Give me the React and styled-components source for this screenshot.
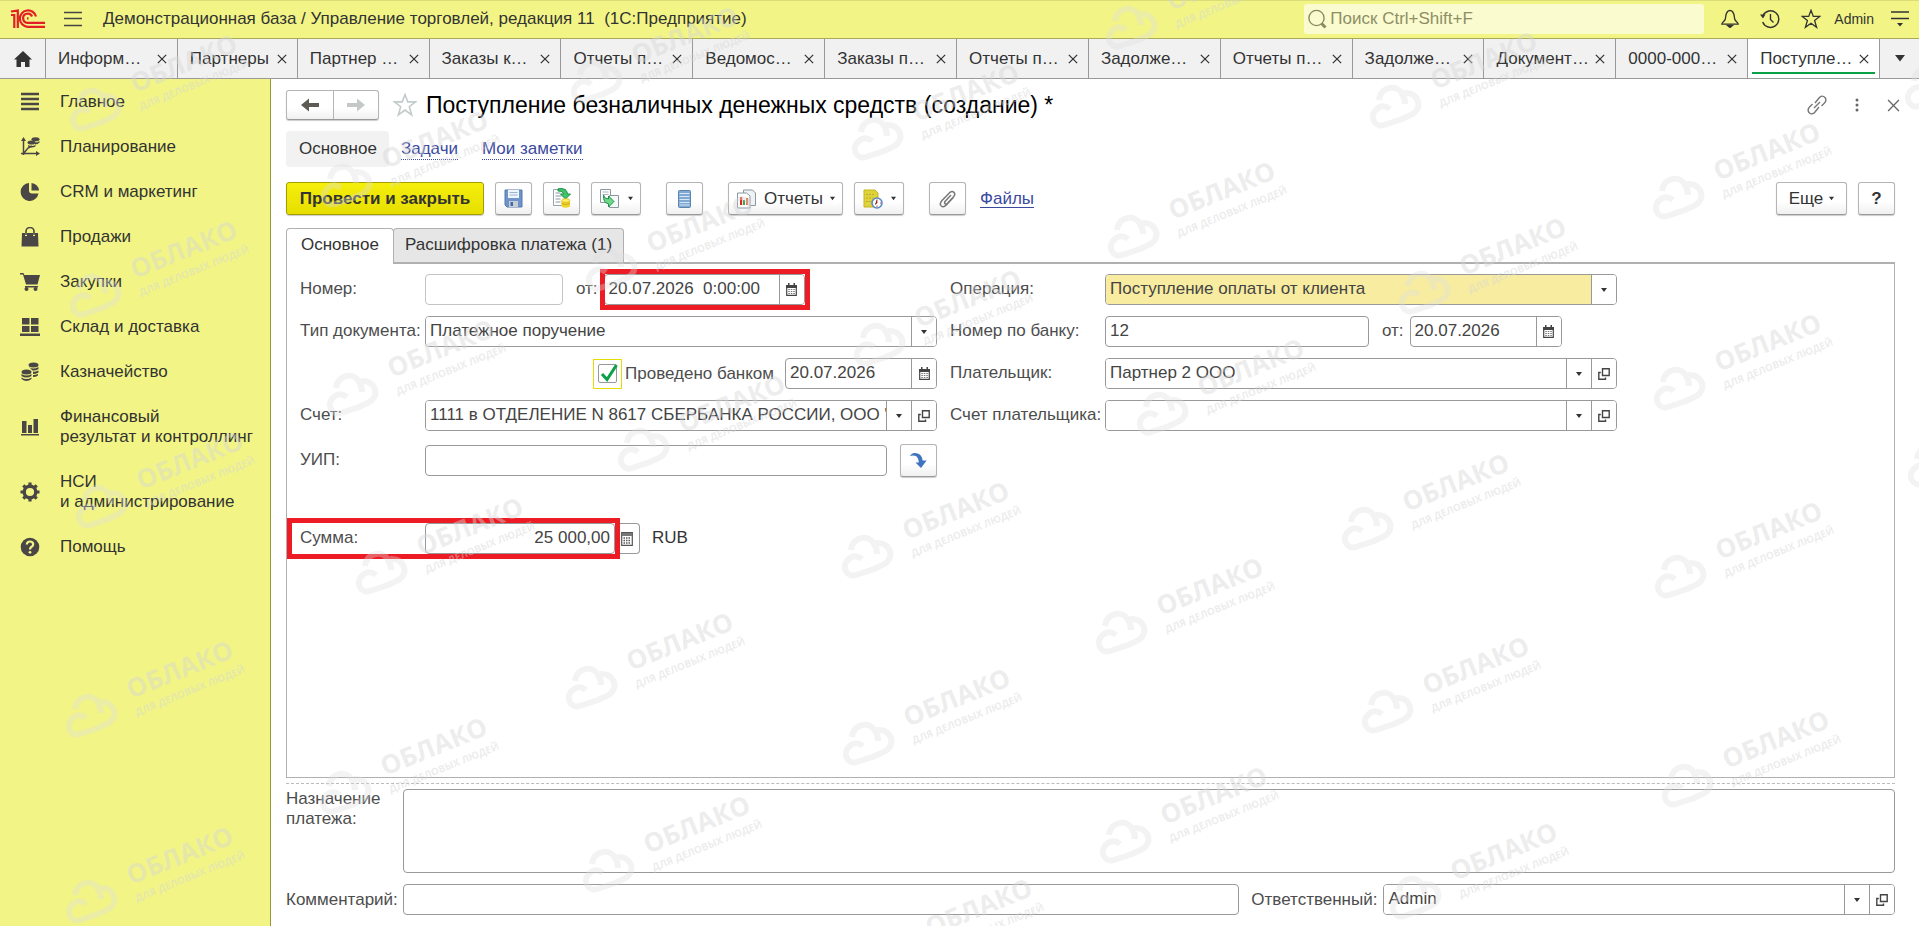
import React, { useState } from 'react';
import styled, { createGlobalStyle, css } from 'styled-components';

const menuItems = [
  { icon: 'main', lines: ['Главное'] },
  { icon: 'plan', lines: ['Планирование'] },
  { icon: 'crm', lines: ['CRM и маркетинг'] },
  { icon: 'sales', lines: ['Продажи'] },
  { icon: 'cart', lines: ['Закупки'] },
  { icon: 'stock', lines: ['Склад и доставка'] },
  { icon: 'coins', lines: ['Казначейство'] },
  { icon: 'bars', lines: ['Финансовый', 'результат и контроллинг'] },
  { icon: 'gear', lines: ['НСИ', 'и администрирование'] },
  { icon: 'help', lines: ['Помощь'] }
];

const openTabs = [
  'Информ…', 'Партнеры', 'Партнер …', 'Заказы к…', 'Отчеты п…', 'Ведомос…', 'Заказы п…',
  'Отчеты п…', 'Задолже…', 'Отчеты п…', 'Задолже…', 'Документ…', '0000-000…', 'Поступле…'
];

// centre of the cloud, the caption hangs to the right of it
const stamps = [
  [96, 110], [347, 186], [96, 296], [597, 82], [612, 270], [1132, 28], [878, 139], [1134, 237],
  [880, 345], [1396, 107], [1679, 198], [1425, 293], [1931, 88], [102, 507], [353, 395],
  [382, 573], [92, 716], [92, 902], [644, 450], [592, 688], [346, 793], [609, 871], [868, 557],
  [869, 744], [891, 954], [1122, 633], [1126, 842], [1163, 414], [1368, 529], [1388, 712],
  [1416, 898], [1688, 786], [1680, 389], [1681, 577], [1934, 466]
];

const sideIcons = {
  main: <path d="M1 2h18M1 7h18M1 12h18M1 17h18" stroke="#4a4646" strokeWidth="2.4" />,
  plan: (
    <>
      <path d="M3.5 3v15M1 16.500h16M4 16l4-5 4-2" stroke="#4a4646" strokeWidth="1.500" fill="none" />
      <path d="M3.500 0L6 4H1zM20 16.500l-4-2.500v5z" />
      <ellipse cx="15.500" cy="2.200" rx="4" ry="2" />
      <ellipse cx="11.500" cy="5.500" rx="4" ry="2" />
      <path d="M15 5.500q3 0 4.500-1.500v1.500q-1.500 2-4.500 2zM8 8q3.500 2 7.500 0v1.500q-4 2-7.500 0z" />
    </>
  ),
  crm: <path d="M9 1a9 9 0 1 0 9.500 10.500H12A3 3 0 0 1 9 8.500zM11.500 1v7.500h7.500A8.200 8.200 0 0 0 11.500 1z" />,
  sales: (
    <>
      <path d="M2 6h3v3h2V6h6v3h2V6h3l.5 13.500h-17z" />
      <path d="M6 8V4.500a4 4 0 0 1 8 0V8" stroke="#4a4646" strokeWidth="1.600" fill="none" />
    </>
  ),
  cart: (
    <>
      <path d="M0 1h3.500l.8 2H20l-2.500 9.500H6L3 2.500H0zM5 14h13v1.500H5z" />
      <circle cx="6.500" cy="17" r="2" />
      <circle cx="15.500" cy="17" r="2" />
    </>
  ),
  stock: <path d="M2 1h7.500v6.500H2zM11 1h7.500v6.500H11zM2 9h7.500v6H2zM11 9h7.500v6H11zM0 16.500h20v2.500H0z" />,
  coins: (
    <>
      <ellipse cx="13.500" cy="3" rx="5" ry="2.500" />
      <ellipse cx="6.500" cy="10" rx="5" ry="2.500" />
      <path d="M9 5q4 3 9.500 0v2q-3 2-6 1.500zM13 9.500q3 .5 5.500-1v2q-2.500 1.500-5.500 1.500zM13 13q3 0 5-1v1.500q-2 1.500-5 1.500zM1.500 12q5 3 10 0v2q-5 3-10 0zM1.500 15.500q5 3 10 0V17q-5 4-10 0z" />
    </>
  ),
  bars: <path d="M2 4h4.500v12H2zM8 8h4v8H8zM13.500 2H18v14h-4.500zM1 17h18v1.500H1z" />,
  gear: (
    <>
      <circle cx="10" cy="10" r="5.800" fill="none" stroke="#4a4646" strokeWidth="3.400" />
      <path d="M10 .5v4M10 15.500v4M.5 10h4M15.500 10h4M3.300 3.300l3 3M13.700 13.700l3 3M3.300 16.700l3-3M13.700 6.300l3-3" stroke="#4a4646" strokeWidth="3.200" />
    </>
  ),
  help: (
    <>
      <circle cx="10" cy="10" r="9.300" />
      <path d="M6.800 7.500Q7 4.500 10 4.500t3.200 2.700q0 1.600-1.600 2.600T10 12.500" stroke="#f2f585" strokeWidth="2.200" fill="none" />
      <circle cx="10" cy="15.300" r="1.400" fill="#f2f585" />
    </>
  )
};

const SideIcon = ({ name }) => (
  <svg width="20" height="20" viewBox="0 0 20 20" fill="#4a4646">{sideIcons[name]}</svg>
);

const Logo = () => (
  <svg width="36" height="20" viewBox="0 0 36 20" fill="none" stroke="#e31e24" strokeWidth="2.200">
    <path d="M1 2.500 7.800 1.600V19M1 6h3.300v13" />
    <path d="M26 7.500a8.200 8.200 0 1 0-8.500 10.300H35" />
    <path d="M22 7.500a4.600 4.600 0 1 0-4.500 6.300H35" />
    <path d="M18.500 9.300H17" />
  </svg>
);

const Cross = ({ size = 11, color = '#333', width = 1.5 }) => (
  <svg width={size} height={size} viewBox="0 0 12 12" stroke={color} strokeWidth={width}>
    <path d="M1 1l10 10M11 1L1 11" />
  </svg>
);

const Caret = ({ size = 6 }) => (
  <svg width={size} height={size} viewBox="0 0 6 6" fill="#333"><path d="M0 1h6L3 5z" /></svg>
);

const StarIcon = ({ size, color }) => (
  <svg width={size} height={size} viewBox="0 0 20 20" fill="none" stroke={color} strokeWidth="1.300">
    <path d="M10 1.200l2.300 6.200h6.400l-5.100 4 2 6.900L10 14.200l-5.600 4.100 2-6.900-5.100-4h6.400z" />
  </svg>
);

const OpenIcon = () => (
  <svg width="12" height="12" viewBox="0 0 12 12" fill="none" stroke="#444" strokeWidth="1.400">
    <path d="M4.500.8h6.700v6.700H4.500zM2.800 4.500H.8v6.700h6.700V9.500" />
  </svg>
);

const CalendarIcon = () => (
  <svg width="11" height="13" viewBox="0 0 11 13">
    <path d="M.7 2.500h9.600v9.800H.7z" fill="#fff" stroke="#444" strokeWidth="1.200" />
    <path d="M0 2h11v3H0zM2 0h1.500v3H2zM7.500 0H9v3H7.500z" fill="#444" />
    <path d="M2.300 6.500h6.500M2.300 8.500h6.500M2.300 10.500h6.500" stroke="#777" strokeDasharray="1.500 1" />
  </svg>
);

const CalculatorIcon = () => (
  <svg width="12" height="14" viewBox="0 0 12 14">
    <path d="M.7.700h10.600v12.600H.7z" fill="#fff" stroke="#555" strokeWidth="1.200" />
    <path d="M1 1h10v3H1z" fill="#777" />
    <path d="M2.500 6h7M2.500 8.500h7M2.500 11h7" stroke="#555" strokeWidth="1.400" strokeDasharray="1.500 1" />
  </svg>
);

const SaveIcon = () => (
  <svg width="19" height="19" viewBox="0 0 19 19">
    <path d="M1 1h17v17H3l-2-2z" fill="#6f94cc" stroke="#5577ad" />
    <path d="M4 1h11v8H4z" fill="#eef5fb" />
    <path d="M5.500 3.500h8M5.500 6h8" stroke="#9ab6cf" />
    <path d="M5 12h9v6H5z" fill="#c8ced6" />
    <path d="M6.500 13h2.500v4H6.500z" fill="#4469a3" />
  </svg>
);

const PostIcon = () => (
  <svg width="20" height="21" viewBox="0 0 20 21">
    <path d="M1.500 1.500h12v16h-12z" fill="#fff" stroke="#96a3ad" />
    <path d="M3.500 5h5M3.500 8h6M3.500 11h5M3.500 14h5" stroke="#8b98a3" />
    <path d="M6 .8q9-1.300 9.500 5.200h3L13.500 11 8.500 6h3Q11 3 6 3z" fill="#44c46a" stroke="#189244" />
    <path d="M9.500 12.500v6q4 2.500 8.500 0v-6z" fill="#f0d52f" />
    <ellipse cx="13.700" cy="12.500" rx="4.200" ry="1.800" fill="#fff06e" stroke="#d8b619" strokeWidth=".8" />
    <path d="M9.500 15.500q4 2 8.500 0" stroke="#c9a80f" fill="none" />
  </svg>
);

const CreateIcon = () => (
  <svg width="21" height="21" viewBox="0 0 21 21">
    <path d="M1.500 1.500h10v13h-10z" fill="#fff" stroke="#8a979f" />
    <path d="M3.500 4h6M3.500 6.500h6" stroke="#a9b5bd" />
    <path d="M10.500 7.500h9v12h-9z" fill="#f6f9fa" stroke="#8a979f" />
    <path d="M4.500 7q.500 4 5 4V8l5.500 5.500L9.500 19v-3.200Q4 15 4.500 7z" fill="#6fd68a" stroke="#189244" />
  </svg>
);

const RegisterIcon = () => (
  <svg width="13" height="18" viewBox="0 0 13 18">
    <rect x=".5" y=".5" width="12" height="17" rx="1" fill="#7fa8d4" stroke="#5e84ae" />
    <path d="M1.500 3.500h10M1.500 6.500h10M1.500 9.500h10M1.500 12.500h10M1.500 15h10" stroke="#d5e6f5" />
  </svg>
);

const ReportIcon = () => (
  <svg width="21" height="20" viewBox="0 0 21 20">
    <path d="M7.500 1h9l3 3v12.500h-12z" fill="#eef2f4" stroke="#8a979f" />
    <path d="M1.500 4h9l3.500 3v12H1.500z" fill="#fff" stroke="#8a979f" />
    <path d="M4 8h2.200v8H4z" fill="#e0261f" />
    <path d="M7 11h2v5H7z" fill="#2fae4d" />
    <path d="M10 9h2.200v7H10z" fill="#e0562f" />
  </svg>
);

const ScheduleIcon = () => (
  <svg width="20" height="20" viewBox="0 0 20 20">
    <path d="M1 1h11l3 3v14H1z" fill="#dfd23b" stroke="#c2b31f" />
    <path d="M3 5.500h8M3 9h7M3 12.500h5" stroke="#b8aa2c" strokeDasharray="2 1" />
    <circle cx="14" cy="14" r="5" fill="#fff" stroke="#5a8ac8" strokeWidth="1.600" />
    <path d="M14 10.500V14l-2 1.500M14 16.500v1.500M17 14h1" stroke="#d04030" />
  </svg>
);

const ClipIcon = () => (
  <svg width="17" height="18" viewBox="0 0 17 18" fill="none" stroke="#777" strokeWidth="1.500">
    <path d="M12 5L6 11.500q-1 1.500.2 2.300 1 .700 2-.300L14.800 6.500q1.800-2.200.2-4t-4-.2L3 10.500q-3 3.500-.7 5.500 2.200 1.800 5-1l7-7.500" />
  </svg>
);

const FillIcon = () => (
  <svg width="17" height="17" viewBox="0 0 17 17" fill="#3f73bd">
    <path d="M0 4Q2 .2 6.500 1.200 12 2.300 12.600 8.500h4L11 16 5.500 10.500h3.300Q8.500 5 5 3.800 2.500 3 0 4z" />
  </svg>
);

const Watermark = () => (
  <WatermarkLayer aria-hidden="true">
    <svg width="100%" height="100%">
      <defs>
        <g id="stamp">
          <path
            d="M-17 -7C-15 -22 2 -22 6 -13 9 -9 9 -6 9 -3M8 -14C20 -15 26 -4 20 4 17 8 12 9 6 12L-12 18C-22 21 -28 8 -18 1Q-12 -3 -6 2"
            fill="none"
            stroke="#ddd"
            strokeOpacity=".36"
            strokeWidth="6"
          />
          <g transform="translate(39 -17) rotate(-22)" fill="#d6d6d6" fillOpacity=".45">
            <text x="0" y="0" fontSize="26" fontWeight="700">ОБЛАКО</text>
            <text x="-1" y="18" fontSize="10" fontWeight="700">ДЛЯ ДЕЛОВЫХ ЛЮДЕЙ</text>
          </g>
        </g>
      </defs>
      {stamps.map(([x, y]) => <use key={`${x}-${y}`} href="#stamp" x={x} y={y} />)}
    </svg>
  </WatermarkLayer>
);

const DateField = ({ id, value, width, label }) => (
  <FieldGroup $width={width}>
    <Input id={id} defaultValue={value} aria-label={label} />
    <FieldButton type="button" aria-label="Выбрать дату"><CalendarIcon /></FieldButton>
  </FieldGroup>
);

const SelectField = ({ id, value, open, accent }) => (
  <FieldGroup>
    <SelectBox>
      <Select id={id} defaultValue={value} $accent={accent}><option>{value}</option></Select>
      <SelectArrow><Caret /></SelectArrow>
    </SelectBox>
    {open && <FieldButton type="button" aria-label="Открыть"><OpenIcon /></FieldButton>}
  </FieldGroup>
);

const App = () => {
  const [activeTab, setActiveTab] = useState(13);
  const [bankDone, setBankDone] = useState(true);

  return (
    <Page>
      <GlobalStyle />
      <Header>
        <Logo />
        <IconButton type="button" aria-label="Меню">
          <svg width="18" height="18" viewBox="0 0 18 18" stroke="#444" strokeWidth="1.300">
            <path d="M0 2.500h18M0 8.500h18M0 15.500h18" />
          </svg>
        </IconButton>
        <AppTitle>Демонстрационная база / Управление торговлей, редакция 11&nbsp; (1С:Предприятие)</AppTitle>
        <Search>
          <svg width="19" height="20" viewBox="0 0 19 20" fill="none" stroke="#8a8a5c" strokeWidth="1.400">
            <circle cx="8.500" cy="9" r="7.600" />
            <path d="M13.500 14.500l4 4" strokeWidth="3" />
          </svg>
          <SearchInput placeholder="Поиск Ctrl+Shift+F" aria-label="Поиск" />
        </Search>
        <HeaderIcons>
          <IconButton type="button" aria-label="Оповещения">
            <svg width="18" height="19" viewBox="0 0 18 19" fill="none" stroke="#333" strokeWidth="1.300">
              <path d="M9 1.500C4.500 1.500 5 7 4.300 10 3.800 12.500 1 13 .8 15.200h16.400C17 13 14.200 12.500 13.700 10 13 7 13.500 1.500 9 1.500z" />
              <path d="M6.500 16.500h5L9 18.500z" fill="#333" />
            </svg>
          </IconButton>
          <IconButton type="button" aria-label="История">
            <svg width="20" height="20" viewBox="0 0 20 20" fill="none" stroke="#333" strokeWidth="1.400">
              <path d="M3 6.500a8.300 8.300 0 1 1-.300 6.500M10.500 5v5.500l3 3" />
              <path d="M0 5.500h5.500l-2.500 4z" fill="#333" stroke="none" />
            </svg>
          </IconButton>
          <IconButton type="button" aria-label="Избранное"><StarIcon size={20} color="#333" /></IconButton>
          <UserLink href="#user">Admin</UserLink>
          <IconButton type="button" aria-label="Сервис">
            <svg width="18" height="16" viewBox="0 0 18 16" stroke="#333" strokeWidth="1.300">
              <path d="M0 1h18M0 7.500h18" />
              <path d="M6 12h6l-3 3.500z" fill="#333" stroke="none" />
            </svg>
          </IconButton>
        </HeaderIcons>
      </Header>

      <TabBar>
        <HomeTab type="button" aria-label="Начальная страница">
          <svg width="18" height="16" viewBox="0 0 18 16" fill="#333">
            <path d="M9 0l9 8.500h-2.500V16h-4.500v-5H7v5H2.500V8.500H0z" />
          </svg>
        </HomeTab>
        {openTabs.map((tab, i) => (
          <Tab key={i} $active={i === activeTab} $short={tab === 'Партнеры'}>
            <TabLabel type="button" onClick={() => setActiveTab(i)}>{tab}</TabLabel>
            <IconButton type="button" aria-label="Закрыть"><Cross size={10} /></IconButton>
          </Tab>
        ))}
        <MoreTabs type="button" aria-label="Все окна">
          <svg width="10" height="7" viewBox="0 0 10 7" fill="#333"><path d="M0 0h10L5 6.500z" /></svg>
        </MoreTabs>
      </TabBar>

      <Body>
        <Sidebar>
          {menuItems.map(item => (
            <MenuLink key={item.icon} href={`#${item.icon}`}>
              <SideIcon name={item.icon} />
              <span>{item.lines.map(line => <MenuLine key={line}>{line}</MenuLine>)}</span>
            </MenuLink>
          ))}
        </Sidebar>

        <Main>
          <TitleRow>
            <NavButtons>
              <NavButton type="button" aria-label="Назад">
                <svg width="18" height="14" viewBox="0 0 18 14" fill="#5c5c55"><path d="M0 7l8-6.500V5h10v4H8v4.500z" /></svg>
              </NavButton>
              <NavButton type="button" aria-label="Вперед" disabled>
                <svg width="18" height="14" viewBox="0 0 18 14" fill="#c4c8c8"><path d="M18 7l-8-6.500V5H0v4h10v4.500z" /></svg>
              </NavButton>
            </NavButtons>
            <IconButton type="button" aria-label="В избранное"><StarIcon size={24} color="#c3cbcb" /></IconButton>
            <Title>Поступление безналичных денежных средств (создание) *</Title>
            <TitleTools>
              <IconButton type="button" aria-label="Ссылка">
                <svg width="20" height="20" viewBox="0 0 20 20" fill="none" stroke="#777" strokeWidth="1.400">
                  <path d="M8 8l4-5q3-3.500 6-.500 2 3-.5 5.500l-3 3M12 12l-4 5q-3 3.500-6 .500-2-3 .5-5.500l3-3M7 13l6-6" />
                </svg>
              </IconButton>
              <IconButton type="button" aria-label="Действия">
                <svg width="4" height="14" viewBox="0 0 4 14" fill="#666">
                  <circle cx="2" cy="2" r="1.500" /><circle cx="2" cy="7" r="1.500" /><circle cx="2" cy="12" r="1.500" />
                </svg>
              </IconButton>
              <IconButton type="button" aria-label="Закрыть"><Cross size={13} color="#666" width={1.2} /></IconButton>
            </TitleTools>
          </TitleRow>

          <SubNav>
            <SubNavCurrent>Основное</SubNavCurrent>
            <SubNavLink href="#tasks">Задачи</SubNavLink>
            <SubNavLink href="#notes">Мои заметки</SubNavLink>
          </SubNav>

          <Toolbar>
            <PrimaryButton type="button">Провести и закрыть</PrimaryButton>
            <ToolGroup>
              <ToolButton type="button" aria-label="Записать"><SaveIcon /></ToolButton>
              <ToolButton type="button" aria-label="Провести"><PostIcon /></ToolButton>
              <MenuButton type="button" aria-label="Создать на основании"><CreateIcon /><Caret size={5} /></MenuButton>
            </ToolGroup>
            <ToolButton type="button" aria-label="Движения"><RegisterIcon /></ToolButton>
            <ToolGroup>
              <ReportsButton type="button"><ReportIcon />Отчеты<Caret size={5} /></ReportsButton>
              <MenuButton type="button" aria-label="Напоминания"><ScheduleIcon /><Caret size={5} /></MenuButton>
            </ToolGroup>
            <ToolGroup $wide>
              <ToolButton type="button" aria-label="Прикрепить"><ClipIcon /></ToolButton>
              <FilesLink href="#files">Файлы</FilesLink>
            </ToolGroup>
            <ToolbarEnd>
              <MoreButton type="button">Еще<Caret size={5} /></MoreButton>
              <HelpButton type="button">?</HelpButton>
            </ToolbarEnd>
          </Toolbar>

          <PageTabs role="tablist">
            <PageTab type="button" role="tab" aria-selected="true" $active>Основное</PageTab>
            <PageTab type="button" role="tab" aria-selected="false">Расшифровка платежа (1)</PageTab>
          </PageTabs>

          <Panel>
            <LeftColumn>
              <FormRow>
                <Label htmlFor="number">Номер:</Label>
                <FieldGroup $width="138px" $pale><Input id="number" /></FieldGroup>
                <Between htmlFor="date">от:</Between>
                <DateHighlight>
                  <DateField id="date" value={'20.07.2026\u00a0 0:00:00'} width="201px" />
                </DateHighlight>
              </FormRow>
              <FormRow>
                <Label htmlFor="type">Тип документа:</Label>
                <SelectField id="type" value="Платежное поручение" />
              </FormRow>
              <FormRow $end>
                <CheckLabel>
                  <CheckFrame>
                    <Checkbox type="checkbox" checked={bankDone} onChange={e => setBankDone(e.target.checked)} />
                    {bankDone && (
                      <Tick width="20" height="20" viewBox="0 0 20 20" fill="none" stroke="#0aa147" strokeWidth="3">
                        <path d="M4 10l5 5.500L18.500 1" />
                      </Tick>
                    )}
                  </CheckFrame>
                  Проведено банком
                </CheckLabel>
                <DateField value="20.07.2026" width="152px" label="Дата проведения" />
              </FormRow>
              <FormRow>
                <Label htmlFor="account">Счет:</Label>
                <SelectField id="account" value={'1111 в ОТДЕЛЕНИЕ N 8617 СБЕРБАНКА РОССИИ, ООО "'} open />
              </FormRow>
              <UipRow>
                <Label htmlFor="uip">УИП:</Label>
                <FieldGroup><Input id="uip" /></FieldGroup>
                <FillButton type="button" aria-label="Заполнить"><FillIcon /></FillButton>
              </UipRow>
              <SumRow>
                <SumHighlight>
                  <Label htmlFor="sum">Сумма:</Label>
                  <FieldGroup $width="190px"><Input id="sum" defaultValue="25 000,00" $right /></FieldGroup>
                </SumHighlight>
                <CalcButton type="button" aria-label="Калькулятор"><CalculatorIcon /></CalcButton>
                <Currency>RUB</Currency>
              </SumRow>
            </LeftColumn>

            <RightColumn>
              <FormRow>
                <Label htmlFor="operation" $wide>Операция:</Label>
                <SelectField id="operation" value="Поступление оплаты от клиента" accent />
              </FormRow>
              <FormRow>
                <Label htmlFor="bankNumber" $wide>Номер по банку:</Label>
                <FieldGroup $width="264px"><Input id="bankNumber" defaultValue="12" /></FieldGroup>
                <Between htmlFor="bankDate">от:</Between>
                <DateField id="bankDate" value="20.07.2026" width="152px" />
              </FormRow>
              <FormRow>
                <Label htmlFor="payer" $wide>Плательщик:</Label>
                <SelectField id="payer" value="Партнер 2 ООО" open />
              </FormRow>
              <FormRow>
                <Label htmlFor="payerAccount" $wide>Счет плательщика:</Label>
                <SelectField id="payerAccount" value="" open />
              </FormRow>
            </RightColumn>
          </Panel>

          <Splitter />

          <PurposeRow>
            <FooterLabel htmlFor="purpose">Назначение платежа:</FooterLabel>
            <Purpose id="purpose" />
          </PurposeRow>
          <FooterRow>
            <FooterLabel htmlFor="comment">Комментарий:</FooterLabel>
            <CommentBox><FieldGroup><Input id="comment" /></FieldGroup></CommentBox>
            <ResponsibleLabel htmlFor="responsible">Ответственный:</ResponsibleLabel>
            <ResponsibleBox><SelectField id="responsible" value="Admin" open /></ResponsibleBox>
          </FooterRow>
        </Main>
      </Body>
      <Watermark />
    </Page>
  );
};

const GlobalStyle = createGlobalStyle`
  *, *::before, *::after {
    box-sizing: border-box;
  }

  body {
    margin: 0;
    background: #fff;
    color: #333;
    font: 17px/20px "Liberation Sans", Arial, sans-serif;
  }

  button, input, select, textarea {
    font: inherit;
    color: inherit;
  }

  button {
    cursor: pointer;
  }

  svg {
    flex-shrink: 0;
  }
`;

const Page = styled.div`
  position: relative;
  display: flex;
  flex-direction: column;
  min-height: 100vh;
  overflow: hidden;
`;

const WatermarkLayer = styled.div`
  position: absolute;
  inset: 0;
  pointer-events: none;
  font-family: "Open Sans", "Noto Sans", sans-serif;
`;

const IconButton = styled.button`
  display: flex;
  align-items: center;
  justify-content: center;
  padding: 0;
  border: none;
  background: none;
`;

const Header = styled.header`
  display: flex;
  align-items: center;
  height: 39px;
  padding: 0 10px 2px;
  background: #f2f585;
  border-top: 1px solid #d9dc78;
  border-bottom: 1px solid #a9a95a;

  > button {
    margin: 0 21px 0 18px;
  }
`;

const AppTitle = styled.div`
  white-space: nowrap;
`;

const Search = styled.div`
  display: flex;
  align-items: center;
  gap: 3px;
  width: 400px;
  height: 30px;
  margin-left: auto;
  padding-left: 4px;
  border-radius: 3px;
  background: #fafbcf;
`;

const SearchInput = styled.input`
  flex: 1;
  min-width: 0;
  padding: 0;
  border: none;
  outline: none;
  background: none;

  &::placeholder {
    color: #8e8e66;
    opacity: 1;
  }
`;

const HeaderIcons = styled.div`
  display: flex;
  align-items: center;
  gap: 21px;
  margin-left: 17px;
`;

const UserLink = styled.a`
  margin: 0 -4px 0 -8px;
  font-size: 14px;
  color: #333;
  text-decoration: none;
`;

const TabBar = styled.nav`
  display: flex;
  height: 40px;
  background: #f1f1f1;
  border-bottom: 1px solid #999;
`;

const HomeTab = styled(IconButton)`
  width: 45px;
`;

const Tab = styled.div`
  display: flex;
  flex: ${props => props.$short ? 97 : 109} 1 0;
  align-items: center;
  justify-content: space-between;
  min-width: 0;
  padding: 0 10px 0 12px;
  border-left: 1px solid #999;
  background: ${props => props.$active ? 'linear-gradient(#0aa147, #0aa147) center bottom 4px / calc(100% - 8px) 2px no-repeat #fff' : 'transparent'};
`;

const TabLabel = styled.button`
  min-width: 0;
  padding: 0;
  overflow: hidden;
  border: none;
  background: none;
  white-space: nowrap;
`;

const MoreTabs = styled(IconButton)`
  width: 40px;
  border-left: 1px solid #999;
`;

const Body = styled.div`
  display: flex;
  flex: 1;
`;

const Sidebar = styled.nav`
  flex: 0 0 271px;
  padding-top: 1px;
  background: #f2f585;
  border-right: 1px solid #99963c;
`;

const MenuLink = styled.a`
  display: flex;
  align-items: center;
  gap: 20px;
  padding: 12px 10px 13px 20px;
  color: #333;
  text-decoration: none;
`;

const MenuLine = styled.span`
  display: block;
  white-space: nowrap;
`;

const Main = styled.main`
  display: flex;
  flex: 1;
  flex-direction: column;
  min-width: 0;
  padding: 10px 24px 11px 15px;
`;

const TitleRow = styled.div`
  display: flex;
  align-items: center;
  height: 32px;
  gap: 14px;
`;

const raised = css`
  background: linear-gradient(#fff 60%, #f0f0f0);
  border: 1px solid #b5b5b5;
  border-bottom-color: #999;
  border-radius: 3px;
  box-shadow: 0 1px 1px #ccc;
`;

const NavButtons = styled.div`
  display: flex;
  ${raised}
`;

const NavButton = styled(IconButton)`
  width: 46px;
  height: 28px;

  & + & {
    width: 45px;
    border-left: 1px solid #b5b5b5;
  }
`;

const Title = styled.h1`
  margin: 0 0 0 -5px;
  color: #000;
  font-size: 23px;
  font-weight: 400;
  line-height: 28px;
  white-space: nowrap;
`;

const TitleTools = styled.div`
  display: flex;
  align-items: center;
  gap: 28px;
  margin: 0 -5px 0 auto;
`;

const SubNav = styled.nav`
  display: flex;
  align-items: center;
  gap: 24px;
  margin-top: 10px;
`;

const SubNavCurrent = styled.span`
  margin-right: -12px;
  padding: 8px 12px 8px 13px;
  border-radius: 4px;
  background: #f2f2f2;
`;

const SubNavLink = styled.a`
  border-bottom: 1px dotted #3a4a9f;
  color: #3a4a9f;
  text-decoration: none;
`;

const Toolbar = styled.div`
  display: flex;
  align-items: center;
  gap: 25px;
  margin-top: 15px;
`;

const ToolGroup = styled.div`
  display: flex;
  align-items: center;
  gap: ${props => props.$wide ? 14 : 11}px;
`;

const PrimaryButton = styled.button`
  ${raised}
  width: 198px;
  height: 33px;
  margin-right: -14px;
  padding: 0;
  border-color: #a39d00;
  background: linear-gradient(#f5ef0c, #e6de00);
  font-weight: 700;
`;

const ToolButton = styled(IconButton)`
  ${raised}
  width: 37px;
  height: 33px;
`;

const MenuButton = styled(ToolButton)`
  width: 50px;
  gap: 8px;
`;

const ReportsButton = styled(ToolButton)`
  width: 115px;
  gap: 7px;
`;

const FilesLink = styled.a`
  color: #3a4a9f;
  text-underline-offset: 3px;
`;

const ToolbarEnd = styled(ToolGroup)`
  margin-left: auto;
`;

const MoreButton = styled(ToolButton)`
  width: 71px;
  gap: 6px;
`;

const HelpButton = styled(ToolButton)`
  font-weight: 700;
`;

const PageTabs = styled.div`
  display: flex;
  height: 34px;
  margin-top: 13px;
`;

const PageTab = styled.button`
  padding: 0 11px 2px;
  border: 1px solid #b0b0b0;
  border-bottom: none;
  border-radius: 4px 4px 0 0;
  background: #e6e6e6;

  ${props => props.$active && css`
    z-index: 1;
    margin: 0 -1px -2px 0;
    padding: 0 14px 4px;
    background: #fff;
  `}
`;

const Panel = styled.section`
  display: flex;
  flex: 1;
  gap: 13px;
  min-height: 420px;
  padding: 10px 13px;
  border: 1px solid #b0b0b0;
  border-top-width: 2px;
`;

const Column = styled.div`
  display: flex;
  flex-direction: column;
  gap: 11px;
  min-width: 0;
`;

const LeftColumn = styled(Column)`
  flex: 0 1 637px;
`;

const RightColumn = styled(Column)`
  flex: 0 1 667px;
`;

const FormRow = styled.div`
  display: flex;
  align-items: center;
  justify-content: ${props => props.$end ? 'flex-end' : 'flex-start'};
  min-height: 31px;
`;

const Label = styled.label`
  flex: 0 0 ${props => props.$wide ? 155 : 125}px;
  padding-bottom: 2px;
  color: #4d4d4d;
  white-space: nowrap;
`;

const Between = styled.label`
  padding: 0 6px 2px 13px;
  color: #4d4d4d;
`;

const FieldGroup = styled.div`
  display: flex;
  flex: ${props => props.$width ? `0 0 ${props.$width}` : '1 1 0'};
  min-width: 0;
  height: 31px;
  overflow: hidden;
  border: 1px solid ${props => props.$pale ? '#c4c4c4' : '#999'};
  border-radius: 4px;
  background: #fff;
`;

const Input = styled.input`
  flex: 1;
  min-width: 0;
  padding: 0 4px 2px;
  border: none;
  outline: none;
  background: none;
  color: #444;
  text-align: ${props => props.$right ? 'right' : 'left'};
`;

const FieldButton = styled(IconButton)`
  width: 25px;
  border-left: 1px solid #999;
  background: #fff;
`;

const SelectBox = styled.div`
  display: grid;
  flex: 1;
  grid-template-columns: minmax(0, 1fr) 25px;
  min-width: 0;
`;

const Select = styled.select`
  grid-area: 1 / 1 / 2 / 3;
  width: 100%;
  padding: 0 20px 2px 4px;
  appearance: none;
  border: none;
  outline: none;
  background: ${props => props.$accent ? '#f8eca0' : '#fff'};
  color: #444;
`;

const SelectArrow = styled.span`
  display: flex;
  grid-area: 1 / 2;
  align-items: center;
  justify-content: center;
  border-left: 1px solid #999;
  background: #fff;
  pointer-events: none;
`;

const highlight = css`
  position: relative;

  &::after {
    content: '';
    position: absolute;
    border: 5px solid #ed1c24;
    pointer-events: none;
  }
`;

const DateHighlight = styled.div`
  display: flex;
  ${highlight}

  &::after {
    inset: -5px -5px -5px -4px;
  }
`;

const CheckLabel = styled.label`
  display: flex;
  align-items: center;
  gap: 3px;
  margin-right: 11px;
  color: #4d4d4d;
`;

const CheckFrame = styled.span`
  display: grid;
  place-items: center;
  width: 29px;
  height: 30px;
  border: 1px solid #e6dd00;
`;

const Checkbox = styled.input`
  grid-area: 1 / 1;
  width: 19px;
  height: 19px;
  margin: 0;
  appearance: none;
  border: 1px solid #999;
  border-radius: 2px;
  background: #fff;
`;

const Tick = styled.svg`
  grid-area: 1 / 1;
  pointer-events: none;
`;

const FillButton = styled(ToolButton)`
  flex-shrink: 0;
  margin-left: 13px;
`;

const UipRow = styled(FormRow)`
  margin-top: 2px;
`;

const SumRow = styled(FormRow)`
  margin-top: 35px;
`;

const SumHighlight = styled.div`
  display: flex;
  align-items: center;
  ${highlight}

  &::after {
    inset: -5px -5px -5px -13px;
  }
`;

const CalcButton = styled(FieldButton)`
  height: 31px;
  border: 1px solid #999;
  border-left: none;
  border-radius: 0 4px 4px 0;
`;

const Currency = styled.span`
  margin-left: 12px;
  padding-bottom: 2px;
`;

const Splitter = styled.div`
  margin: 5px 0;
  border-top: 1px dashed #bbb;
`;

const PurposeRow = styled.div`
  display: flex;
`;

const FooterLabel = styled.label`
  flex: 0 0 117px;
  width: 117px;
  color: #4d4d4d;
`;

const Purpose = styled.textarea`
  flex: 1;
  height: 84px;
  padding: 4px;
  resize: none;
  border: 1px solid #999;
  border-radius: 4px;
  outline: none;
`;

const FooterRow = styled.div`
  display: flex;
  align-items: center;
  margin-top: 11px;
`;

const CommentBox = styled.div`
  display: flex;
  flex: 837 1 0;
`;

const ResponsibleLabel = styled.label`
  margin: 0 6px 0 12px;
  color: #4d4d4d;
`;

const ResponsibleBox = styled.div`
  display: flex;
  flex: 512 1 0;
`;

export default App;
